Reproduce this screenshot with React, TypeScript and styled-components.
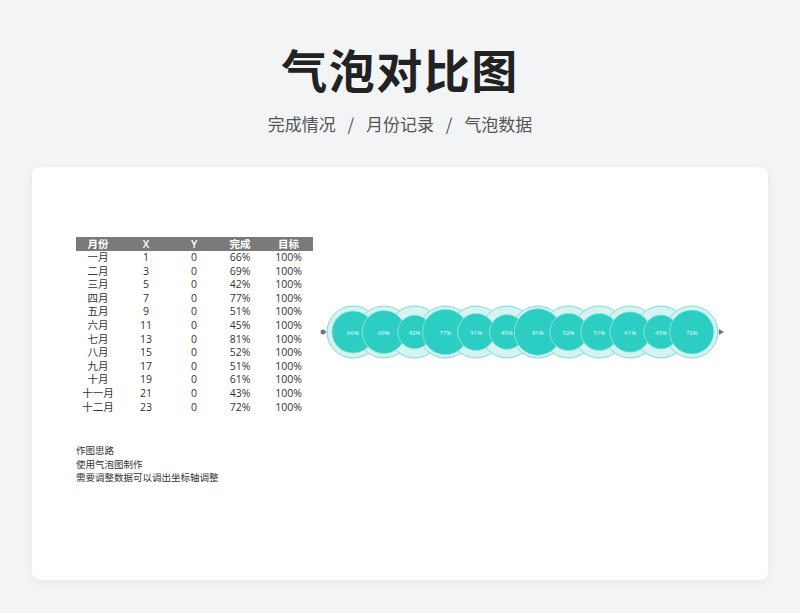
import React from "react";
import styled, { createGlobalStyle } from "styled-components";

const G = createGlobalStyle`
  body { margin:0; background:#f3f4f6; font-family:"Noto Sans CJK SC","Noto Sans",sans-serif; }
`;
const Page = styled.div`width:800px;height:613px;display:flex;flex-direction:column;align-items:center;`;
const Title = styled.h1`margin:36px 0 0;font-size:46px;line-height:64px;font-weight:700;color:#222;letter-spacing:1.5px;`;
const Sub = styled.div`margin-top:12px;font-size:17px;color:#555;line-height:24px;word-spacing:8px;`;
const Card = styled.div`margin-top:31px;width:736px;height:413px;box-sizing:border-box;background:#fff;border-radius:8px;box-shadow:0 2px 8px rgba(0,0,0,.06);display:flex;padding:70px 0 0 44px;`;
const Left = styled.div`width:237px;display:flex;flex-direction:column;`;
const Table = styled.div`display:grid;grid-template-columns:44px 52px 44px 48px 49px;font-family:"Open Sans","Noto Sans CJK SC",sans-serif;font-size:10.5px;color:#333;`;
const Cell = styled.div<{ h?: boolean }>`text-align:center;height:${p => p.h ? 14 : 13.6}px;line-height:${p => p.h ? 14 : 13.6}px;${p => p.h && "background:#7a7a7a;color:#fff;font-weight:600;"}`;
const Notes = styled.div`margin-top:30px;font-size:9.5px;line-height:13.5px;color:#333;`;
const Chart = styled.svg`margin:56px 0 0 6px;`;

const months = ["一月","二月","三月","四月","五月","六月","七月","八月","九月","十月","十一月","十二月"];
const pct = [66,69,42,77,51,45,81,52,51,61,43,72];

export default function App() {
  return (
    <Page>
      <G />
      <Title>气泡对比图</Title>
      <Sub>完成情况 / 月份记录 / 气泡数据</Sub>
      <Card>
        <Left>
          <Table>
            {["月份","X","Y","完成","目标"].map(h => <Cell h key={h}>{h}</Cell>)}
            {months.map((m, i) => (
              <React.Fragment key={m}>
                <Cell>{m}</Cell><Cell>{i * 2 + 1}</Cell><Cell>0</Cell><Cell>{pct[i]}%</Cell><Cell>100%</Cell>
              </React.Fragment>
            ))}
          </Table>
          <Notes>作图思路<br />使用气泡图制作<br />需要调整数据可以调出坐标轴调整</Notes>
        </Left>
        <Chart width="410" height="80" viewBox="0 0 410 80">
          <line x1="4" y1="39" x2="404" y2="39" stroke="#888" strokeWidth="1" />
          <circle cx="4" cy="39" r="2.5" fill="#777" />
          <path d="M400 36 L405 39 L400 42Z" fill="#777" />
          {pct.map((_, i) => (
            <circle key={"o" + i} cx={34 + i * 30.8} cy="39" r="26" fill="#d5f3f1" stroke="#7fdcd5" strokeWidth="1" />
          ))}
          {pct.map((p, i) => (
            <g key={"i" + i}>
              <circle cx={34 + i * 30.8} cy="39" r={26 * Math.sqrt(p / 100)} fill="#2ccdc3" stroke="#9fe7e1" strokeWidth="0.8" />
              <text x={34 + i * 30.8} y="41.5" fontSize="6" fill="#e8fffd" textAnchor="middle" fontFamily="Open Sans">{p}%</text>
            </g>
          ))}
        </Chart>
      </Card>
    </Page>
  );
}
